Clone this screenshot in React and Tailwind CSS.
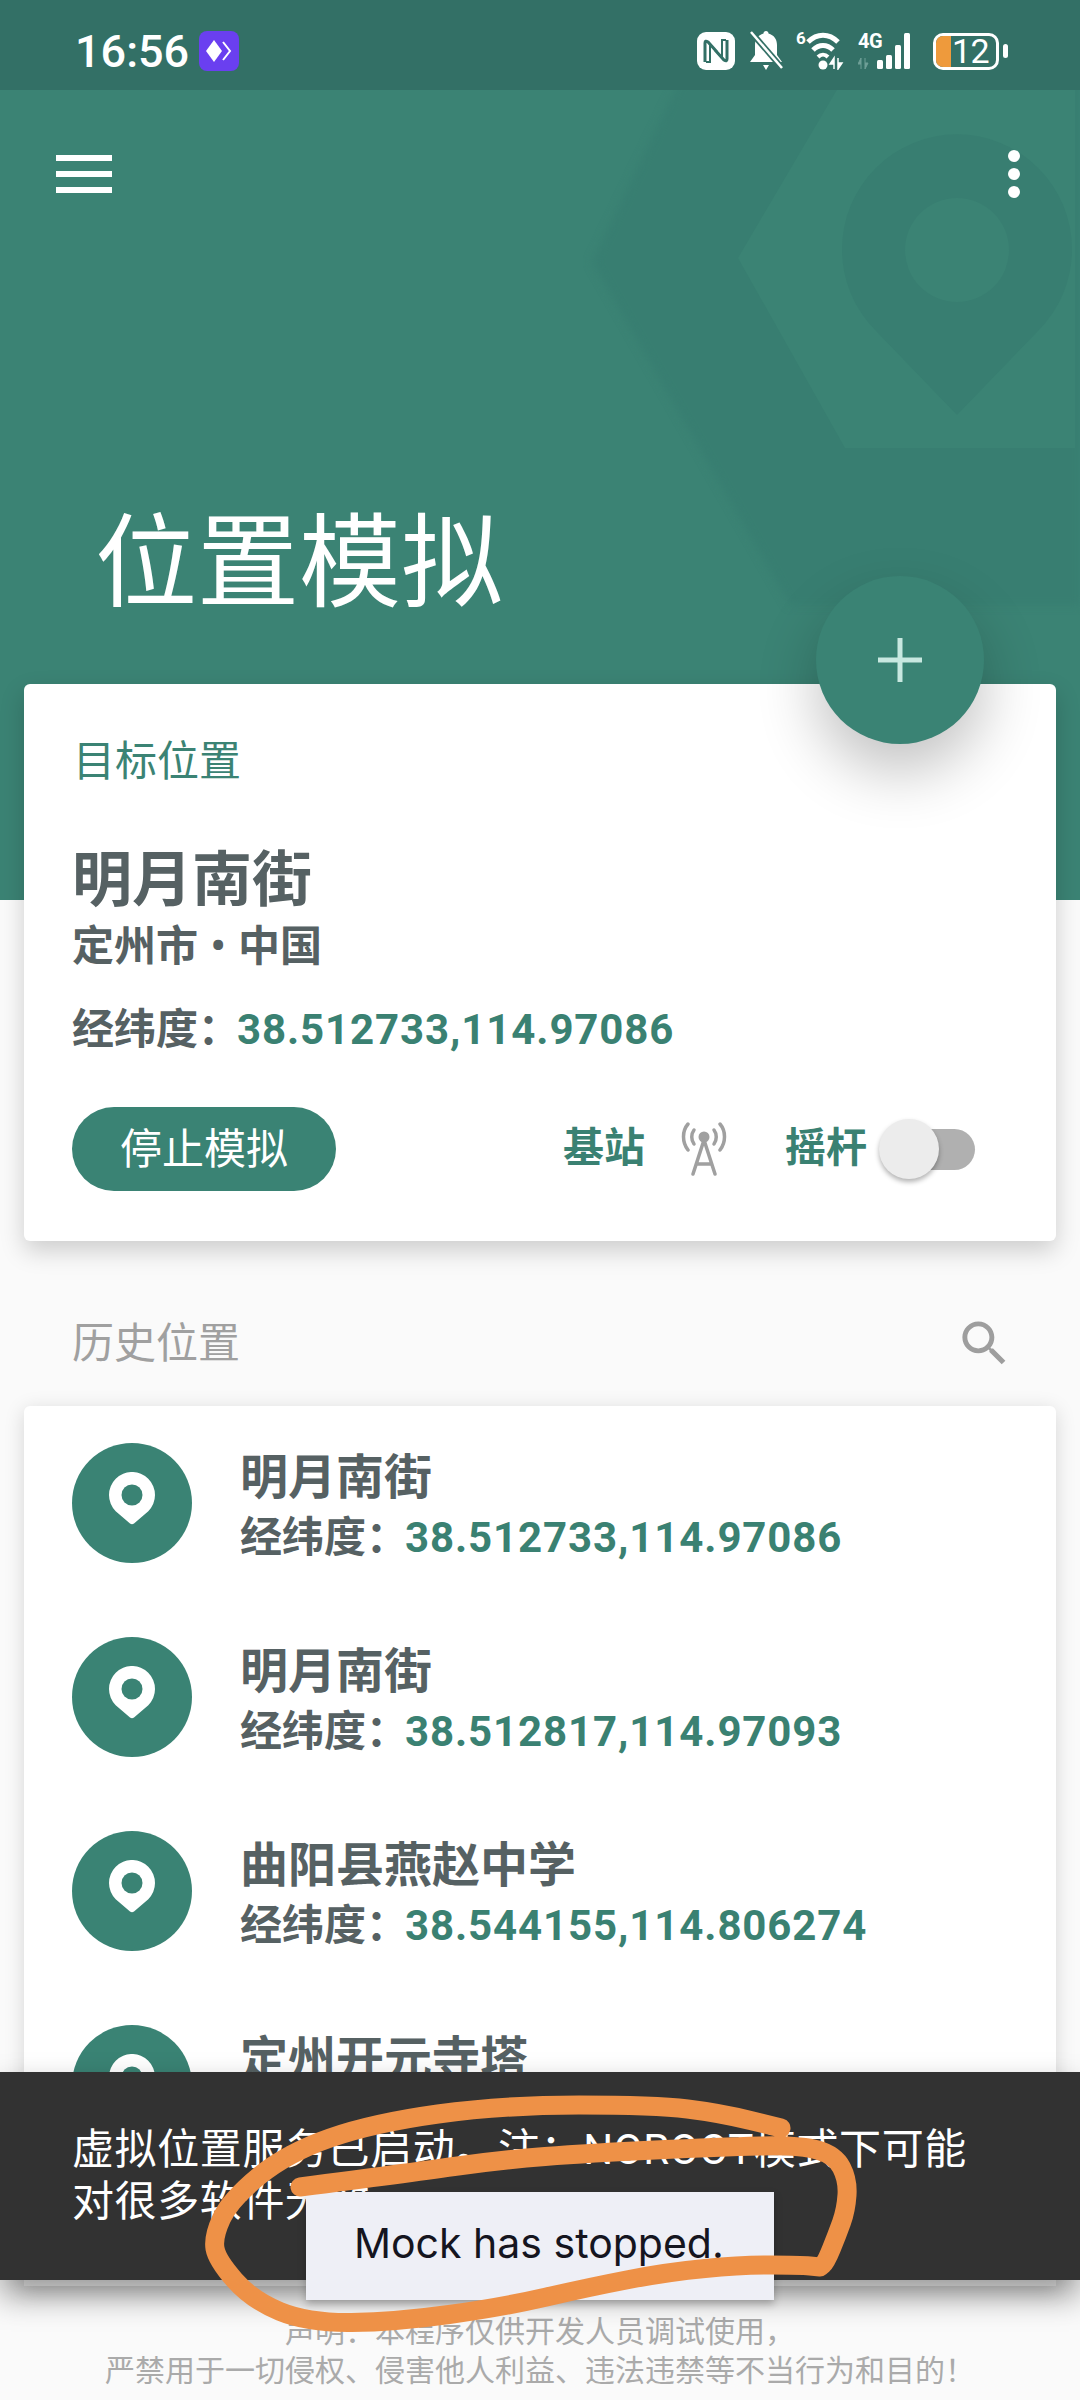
import React from 'react';

const history = [
  { name: '明月南街', coords: '38.512733,114.97086' },
  { name: '明月南街', coords: '38.512817,114.97093' },
  { name: '曲阳县燕赵中学', coords: '38.544155,114.806274' },
  { name: '定州开元寺塔', coords: '38.505121,114.98312' },
];

// freehand circle around the toast, drawn on the screenshot
const scribble = [
  [300, 2187], [408, 2173], [500, 2160], [590, 2153], [720, 2147], [800, 2145], [835, 2155], [848, 2180], [846, 2210],
  [837, 2235], [826, 2262], [820, 2267], [820, 2267], [800, 2265], [742, 2265], [668, 2272], [590, 2287], [503, 2307],
  [395, 2322], [308, 2323], [252, 2300], [217, 2260], [213, 2237], [230, 2200], [287, 2153], [373, 2123], [503, 2105],
  [655, 2105], [720, 2113], [781, 2128],
];

function smoothPath(pts) {
  let d = `M${pts[0][0]} ${pts[0][1]}`;
  for (let i = 1; i < pts.length - 1; i++) {
    const mx = (pts[i][0] + pts[i + 1][0]) / 2;
    const my = (pts[i][1] + pts[i + 1][1]) / 2;
    d += ` Q${pts[i][0]} ${pts[i][1]} ${mx} ${my}`;
  }
  const last = pts[pts.length - 1];
  return d + ` L${last[0]} ${last[1]}`;
}

function StatusIcons() {
  return (
    <div className="flex items-center">
      <svg width="38" height="38" viewBox="0 0 38 38" className="mr-[13px]">
        <rect x="0" y="0" width="38" height="38" rx="9" fill="#fff" />
        <path d="M8 30V11q0-3 3-1l9 10M30 8v19q0 3-3 1l-9-10" fill="none" stroke="#337066" strokeWidth="3" />
        <path d="M13 13v17h-4M25 25V8h4" fill="none" stroke="#337066" strokeWidth="2" />
      </svg>
      <svg width="36" height="40" viewBox="0 0 36 40" className="mr-[12px]">
        <path d="M18 0c1.500 0 2.500 1 2.500 2.500C26 4 29 8.500 29 14v10l5 7H2l5-7V14C7 8.500 10 4 15.500 2.500 15.500 1 16.500 0 18 0z" fill="#fff" />
        <path d="M15 34h6l-3 5z" fill="#fff" />
        <path d="M3 1l31 36" stroke="#337066" strokeWidth="6" />
        <path d="M3 1l31 36" stroke="#fff" strokeWidth="2.500" />
      </svg>
      <div className="relative w-[50px] h-[38px] mr-[12px]">
        <span className="absolute left-0 -top-[2px] text-[17px] leading-[17px] font-bold text-white">6</span>
        <svg width="50" height="38" viewBox="0 0 50 38" className="absolute inset-0">
          <path d="M12 10C21 1 33 1 42 10" fill="none" stroke="#fff" strokeWidth="5" />
          <path d="M17 18C23 12 31 12 37 18" fill="none" stroke="#fff" strokeWidth="5" />
          <path d="M22 25C25 22 29 22 32 25" fill="none" stroke="#fff" strokeWidth="4" />
          <circle cx="27" cy="33" r="4.500" fill="#fff" />
          <path d="M38 37V26l-4 6h4M42 26v11l4-6h-4" fill="#fff" stroke="#fff" strokeWidth="1.500" />
        </svg>
      </div>
      <div className="relative w-[62px] h-[38px] mr-[13px]">
        <span className="absolute left-0 -top-[1px] text-[20px] leading-[20px] font-bold text-white tracking-[-0.5px]">4G</span>
        <svg width="62" height="38" viewBox="0 0 62 38" className="absolute inset-0">
          <path d="M3 37V26l-3 6h3M7 26v11l3-6H7" fill="#6f9f97" stroke="#6f9f97" strokeWidth="1" />
          <rect x="19" y="28" width="6" height="9" rx="1.500" fill="#fff" />
          <rect x="28" y="23" width="6" height="14" rx="1.500" fill="#fff" />
          <rect x="37" y="13" width="6" height="24" rx="1.500" fill="#fff" />
          <rect x="46" y="1" width="6" height="36" rx="1.500" fill="#fff" />
        </svg>
      </div>
      <div className="relative w-[66px] h-[37px] rounded-[10px] border-[3px] border-white overflow-hidden flex items-center">
        <div className="w-[15px] h-full bg-[#ee9a3c]" />
        <span className="ml-[1px] text-[34px] leading-none text-white tracking-[-0.5px]">12</span>
      </div>
      <div className="ml-[4px] w-[5px] h-[14px] rounded-full bg-white" />
    </div>
  );
}

function PinIcon() {
  return (
    <svg width="46" height="54" viewBox="0 0 46 54">
      <path d="M25 51.500q-2 1.500-4 0L6.700 39.200A23 23 0 1 1 39.300 39.200z" fill="#fff" />
      <circle cx="23" cy="23" r="10.500" fill="#3a8374" />
    </svg>
  );
}

function AntennaIcon() {
  return (
    <svg width="46" height="54" viewBox="0 0 46 54" fill="none" stroke="#a0a0a0" strokeLinecap="round">
      <circle cx="23" cy="15" r="5.500" fill="#a0a0a0" stroke="none" />
      <path d="M7 2C1 9 1 20 7 28M39 2c6 7 6 18 0 26" strokeWidth="3.500" />
      <path d="M13 8c-3 4-3 10 0 14M33 8c3 4 3 10 0 14" strokeWidth="3.500" />
      <path d="M23 18L12 52M23 18l11 34M16 42h14" strokeWidth="3.500" />
    </svg>
  );
}

function CoordLine({ value }) {
  return (
    <div className="flex items-center text-[42px] leading-[48px] font-bold text-[#566163]">
      <span>经纬度：</span>
      <span className="text-[#3a8172] tracking-[0.9px] -ml-[3px]">{value}</span>
    </div>
  );
}

function HistoryRow({ item }) {
  return (
    <div className="flex items-center h-[194px] shrink-0">
      <div className="w-[120px] h-[120px] rounded-full bg-[#3a8374] flex items-center justify-center shrink-0">
        <div className="-mt-[8px] flex"><PinIcon /></div>
      </div>
      <div className="ml-[48px] mt-[4px]">
        <div className="text-[48px] leading-[60px] font-bold text-[#566163]">{item.name}</div>
        <div className="mt-[6px]"><CoordLine value={item.coords} /></div>
      </div>
    </div>
  );
}

export default function App() {
  return (
    <div className="relative w-[1080px] h-[2400px] overflow-hidden bg-[#fafafa] font-['Roboto','Noto_Sans_CJK_SC',sans-serif]">
      <div className="flex items-center justify-between h-[90px] pt-[12px] pl-[75px] pr-[72px] bg-[#337066]">
        <div className="flex items-center">
          <span className="text-[45px] leading-none font-medium text-white">16:56</span>
          <div className="ml-[10px] w-[40px] h-[40px] rounded-[8px] bg-[#6a3ff0] flex items-center justify-center">
            <svg width="30" height="30" viewBox="0 0 30 30">
              <path d="M10 4l8 11-8 11-8-11z" fill="#fff" />
              <path d="M19 6l7 9-7 9" fill="none" stroke="#fff" strokeWidth="2" />
            </svg>
          </div>
        </div>
        <StatusIcons />
      </div>

      <header className="relative h-[810px] bg-[#3b8374] overflow-hidden">
        <svg className="absolute inset-0" width="1080" height="810" viewBox="0 90 1080 810">
          <path d="M680 80L592 262L790 605H1080V80z" fill="#387e71" className="blur-[4px]" />
          <path d="M738 258L838 88H1075V448H845z" fill="#3b8374" />
          <path d="M957 415L876 331A115 115 0 1 1 1038 331z" fill="#387e71" />
          <circle cx="957" cy="250" r="52" fill="#3b8374" />
        </svg>
        <div className="relative flex items-center justify-between pl-[56px] pr-[60px] pt-[60px]">
          <div className="flex flex-col gap-[10px]">
            <div className="w-[56px] h-[6px] bg-white" />
            <div className="w-[56px] h-[6px] bg-white" />
            <div className="w-[56px] h-[6px] bg-white" />
          </div>
          <div className="flex flex-col gap-[6px]">
            <div className="w-[12px] h-[12px] rounded-full bg-white" />
            <div className="w-[12px] h-[12px] rounded-full bg-white" />
            <div className="w-[12px] h-[12px] rounded-full bg-white" />
          </div>
        </div>
        <h1 className="relative mt-[315px] ml-[95px] text-[102px] leading-none font-normal text-white">位置模拟</h1>
      </header>

      <section className="relative -mt-[216px] mx-[24px] h-[557px] bg-white rounded-[6px] shadow-[0_10px_24px_rgba(0,0,0,0.18)] px-[48px] pt-[53px]">
        <div className="text-[42px] leading-[50px] text-[#3b8374] pl-[1px]">目标位置</div>
        <div className="mt-[58px] text-[60px] leading-[72px] font-bold text-[#566163]">明月南街</div>
        <div className="mt-[5px] text-[42px] leading-[50px] font-bold text-[#566163] [word-spacing:2px]">定州市 • 中国</div>
        <div className="mt-[34px]"><CoordLine value="38.512733,114.97086" /></div>
        <div className="mt-[53px] flex items-center">
          <div className="w-[264px] h-[84px] rounded-full bg-[#3a8374] flex items-center justify-center text-[42px] text-white">停止模拟</div>
          <span className="ml-[227px] text-[41px] font-bold text-[#3a8172]">基站</span>
          <div className="ml-[36px] flex"><AntennaIcon /></div>
          <span className="ml-[58px] text-[41px] font-bold text-[#3a8172]">摇杆</span>
          <div className="relative ml-[10px] w-[98px] h-[60px] flex items-center justify-end">
            <div className="w-[70px] h-[41px] rounded-full bg-[#b0b0b0]" />
            <div className="absolute left-[2px] top-0 w-[60px] h-[60px] rounded-full bg-[#ececec] shadow-[0_3px_5px_rgba(0,0,0,0.3)]" />
          </div>
        </div>
      </section>

      <div className="flex items-center justify-between h-[165px] pt-[40px] pl-[72px] pr-[66px]">
        <span className="text-[42px] text-[#a0a0a0]">历史位置</span>
        <svg width="59" height="59" viewBox="0 0 24 24" fill="#9e9e9e">
          <path d="M15.500 14h-.79l-.28-.27C15.410 12.590 16 11.110 16 9.500 16 5.910 13.090 3 9.500 3S3 5.910 3 9.500 5.910 16 9.500 16c1.610 0 3.090-.59 4.230-1.570l.27.28v.79l5 4.990L20.490 19l-4.990-5zm-6 0C7.010 14 5 11.990 5 9.500S7.010 5 9.500 5 14 7.010 14 9.500 11.990 14 9.500 14z" />
        </svg>
      </div>

      <section className="mx-[24px] h-[880px] bg-white rounded-t-[6px] shadow-[0_4px_20px_rgba(0,0,0,0.15)] px-[48px] overflow-hidden flex flex-col">
        {history.map((item, i) => <HistoryRow key={i} item={item} />)}
      </section>

      <div className="mt-[26px] text-center text-[30px] leading-[39px] text-[#aaaaaa]">
        <div>声明：本程序仅供开发人员调试使用，</div>
        <div>严禁用于一切侵权、侵害他人利益、违法违禁等不当行为和目的！</div>
      </div>

      <div className="absolute left-0 right-0 top-[2072px] h-[208px] bg-[#323232] px-[72px] pt-[52px] text-[42px] leading-[52px] tracking-[0.6px] text-white shadow-[0_16px_30px_rgba(0,0,0,0.4)]">
        <div>虚拟位置服务已启动。注：NOROOT模式下可能</div>
        <div>对很多软件无效</div>
      </div>

      <div className="absolute left-[306px] top-[2192px] w-[468px] h-[108px] bg-[#eeeff6] shadow-[0_4px_8px_rgba(0,0,0,0.25)] flex items-center pl-[48px] pb-[4px] text-[41px] text-[#15151f] font-['Inter',sans-serif]">
        Mock has stopped.
      </div>

      <svg className="absolute inset-0 pointer-events-none" width="1080" height="2400" viewBox="0 0 1080 2400">
        <path d={smoothPath(scribble)} fill="none" stroke="#ee9147" strokeWidth="19" strokeLinecap="round" strokeLinejoin="round" />
      </svg>

      <div className="absolute left-[816px] top-[576px] w-[168px] h-[168px] rounded-full bg-[#3a8374] shadow-[0_28px_60px_rgba(0,0,0,0.24)] flex items-center justify-center">
        <svg width="44" height="44" viewBox="0 0 44 44" fill="#c8e8e0">
          <rect x="19.500" y="0" width="5" height="44" />
          <rect x="0" y="19.500" width="44" height="5" />
        </svg>
      </div>
    </div>
  );
}
